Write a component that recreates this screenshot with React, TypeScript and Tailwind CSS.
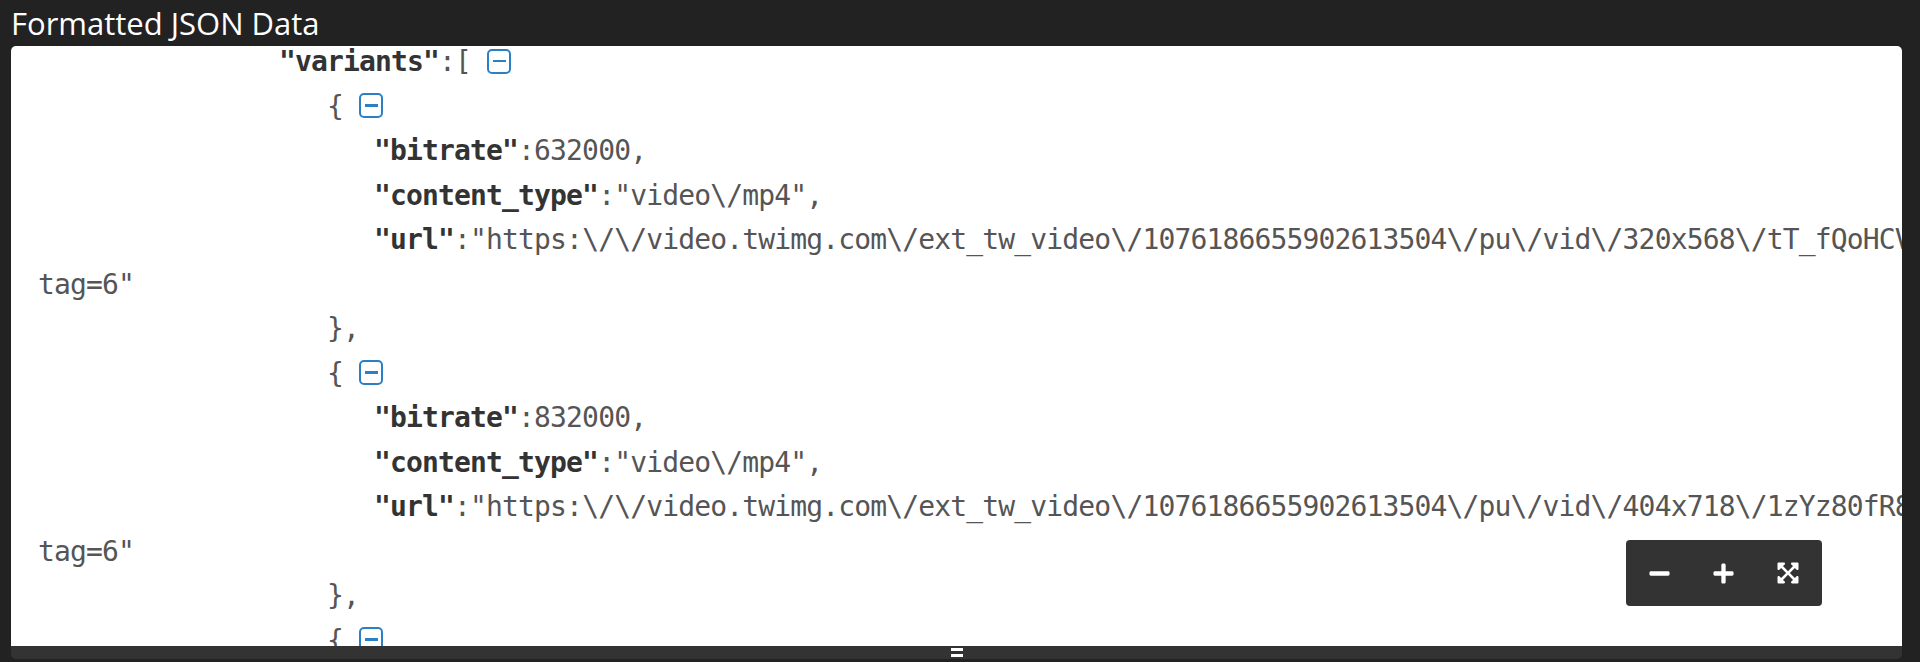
import React from 'react';
import { FaMinus, FaPlus, FaExpandArrowsAlt } from 'react-icons/fa';

const Toggle = () => (
  <span className="inline-flex items-center justify-center w-[24px] h-[25px] border-[2.5px] border-[#2b80c5] rounded-[5px] align-middle -mt-[4px]">
    <span className="block w-[13px] h-[2.5px] bg-[#2b80c5]" />
  </span>
);

const Key = ({ children }: { children: React.ReactNode }) => (
  <span className="font-bold text-[#333]">&quot;{children}&quot;</span>
);

const Line = ({ indent, children }: { indent: number; children: React.ReactNode }) => (
  <div className="h-[44.5px] leading-[44.5px] whitespace-nowrap" style={{ paddingLeft: indent }}>
    {children}
  </div>
);

const App = () => {
  const url1 =
    '"https:\\/\\/video.twimg.com\\/ext_tw_video\\/1076186655902613504\\/pu\\/vid\\/320x568\\/tT_fQoHCVe8pyRvI.mp4?';
  const url2 =
    '"https:\\/\\/video.twimg.com\\/ext_tw_video\\/1076186655902613504\\/pu\\/vid\\/404x718\\/1zYz80fR8wQmJd2k.mp4?';

  return (
    <div className="w-full h-[662px] bg-[#222] flex flex-col overflow-hidden">
      {/* Title */}
      <div className="h-[46px] pl-[11px] text-white text-[31px] leading-[46px] font-['Open_Sans',sans-serif]">
        Formatted JSON Data
      </div>

      {/* Panel */}
      <div className="ml-[11px] mr-[18px] h-[613px] flex flex-col rounded-[5px] overflow-hidden">
        <div className="relative flex-1 bg-white overflow-hidden">
          <div className="-mt-[6px] font-['DejaVu_Sans_Mono',monospace] text-[28px] tracking-[-0.85px] text-[#555]">
            <Line indent={268}>
              <Key>variants</Key>:[ <Toggle />
            </Line>
            <Line indent={316}>
              {'{ '}
              <Toggle />
            </Line>
            <Line indent={363}>
              <Key>bitrate</Key>:632000,
            </Line>
            <Line indent={363}>
              <Key>content_type</Key>:&quot;video\/mp4&quot;,
            </Line>
            <Line indent={363}>
              <Key>url</Key>:{url1}
            </Line>
            <Line indent={27}>tag=6&quot;</Line>
            <Line indent={316}>{'},'}</Line>
            <Line indent={316}>
              {'{ '}
              <Toggle />
            </Line>
            <Line indent={363}>
              <Key>bitrate</Key>:832000,
            </Line>
            <Line indent={363}>
              <Key>content_type</Key>:&quot;video\/mp4&quot;,
            </Line>
            <Line indent={363}>
              <Key>url</Key>:{url2}
            </Line>
            <Line indent={27}>tag=6&quot;</Line>
            <Line indent={316}>{'},'}</Line>
            <Line indent={316}>
              {'{ '}
              <Toggle />
            </Line>
          </div>

          {/* Zoom controls */}
          <div className="absolute right-[80px] bottom-[40px] w-[196px] h-[66px] bg-[#333] rounded-[4px] flex items-center justify-between px-[22px] text-white">
            <FaMinus className="w-[23px] h-[23px]" />
            <FaPlus className="w-[23px] h-[23px]" />
            <FaExpandArrowsAlt className="w-[24px] h-[24px]" />
          </div>
        </div>

        {/* Resize bar */}
        <div className="h-[13px] bg-[#333] flex flex-col items-center justify-center gap-[3px]">
          <span className="block w-[12px] h-[3px] bg-white" />
          <span className="block w-[12px] h-[3px] bg-white" />
        </div>
      </div>
    </div>
  );
};

export default App;
